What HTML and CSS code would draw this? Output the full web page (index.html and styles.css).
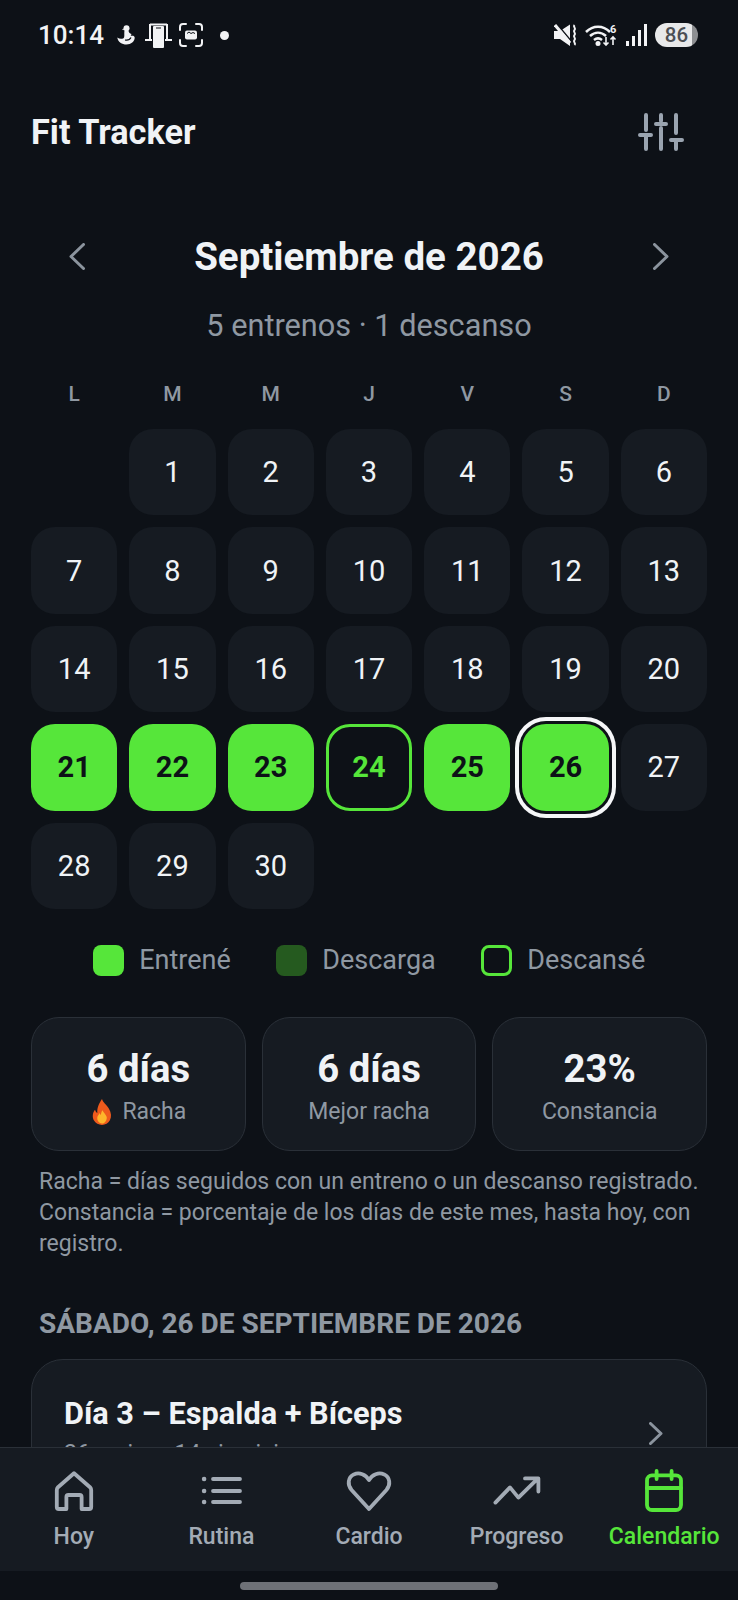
FILE: index.html
```html
<!DOCTYPE html>
<html lang="es">

<head>
    <meta charset="UTF-8">
    <meta name="viewport" content="width=device-width, initial-scale=1.0">
    <title>Fit Tracker</title>
    <link rel="stylesheet" href="styles.css">
</head>

<body>
    <main class="phone">
        <div class="status-bar">
            <span class="clock">10:14</span>
            <svg class="st-duck" viewBox="0 0 18 20"><circle cx="9.500" cy="3.200" r="3" fill="#f2f3f5"/><path d="M6.500 3.500L5 4.500l2 .8zM7.500 5.500h4c.2 1.800 1 3 3 3.500l-.8 1.800c2.300-.4 4 0 4 2 0 3.700-3.700 6.700-8.200 6.700S.8 17 .3 12.500c2 1.500 4.200 1.700 6.200.7C8 12 6.900 8.500 7.500 5.500z" fill="#f2f3f5"/><path d="M8 15c2.500.5 5-.5 6-2.500" fill="none" stroke="#0d1117" stroke-width="1.200"/></svg>
            <svg class="st-desk" viewBox="0 0 27 25"><path d="M5 1.500h17M5 1v15M22 1v15M0 17h7M20 17h7" fill="none" stroke="#f2f3f5" stroke-width="2"/><rect x="8" y="3" width="11" height="22" rx="1" fill="#f2f3f5"/><rect x="11" y="4.500" width="5" height="1" fill="#0d1117"/></svg>
            <svg class="st-shot" viewBox="0 0 24 24"><path d="M1 7V4a3 3 0 0 1 3-3h3M17 1h3a3 3 0 0 1 3 3v3M23 17v3a3 3 0 0 1-3 3h-3M7 23H4a3 3 0 0 1-3-3v-3" fill="none" stroke="#f2f3f5" stroke-width="2" stroke-linecap="round"/><rect x="6" y="7.500" width="12" height="9" rx="2" fill="#f2f3f5"/><path d="M8 10.500l2-1.500 2 1.500 2-1 2 1" fill="none" stroke="#0d1117" stroke-width="1"/></svg>
            <span class="st-dot"></span>
            <span class="status-spacer"></span>
            <svg class="st-mute" viewBox="0 0 24 22"><path d="M0 7h6l10-6.500V22L6 15H0z" fill="#f2f3f5"/><path d="M3 0l15 18" fill="none" stroke="#0d1117" stroke-width="1.500"/><path d="M1 1l15 18" fill="none" stroke="#f2f3f5" stroke-width="3"/><path d="M20.500 1c-2 2 2 3 0 5s2 3 0 5 2 3 0 5 2 3 0 5" fill="none" stroke="#f2f3f5" stroke-width="2"/></svg>
            <svg class="st-wifi" viewBox="0 0 33 22"><path d="M1 8c7-7 17-7 24 0M5 12c5-4.500 11-4.500 16 0M9 16c2.500-2 5.500-2 8 0" fill="none" stroke="#f2f3f5" stroke-width="2.500"/><circle cx="13" cy="19.500" r="2.500" fill="#f2f3f5"/><path d="M21 13v8m-2.500-2.500l2.500 2.500 2.500-2.500M28 21v-8m-2.500 2.500l2.500-2.500 2.500 2.500" fill="none" stroke="#f2f3f5" stroke-width="1.600"/><text x="25" y="9" class="st-six">6</text></svg>
            <svg class="st-signal" viewBox="0 0 21 22"><rect x="0" y="17" width="3" height="5" fill="#f2f3f5"/><rect x="6" y="12" width="3" height="10" fill="#f2f3f5"/><rect x="12" y="6" width="3" height="16" fill="#f2f3f5"/><rect x="18" y="0" width="3" height="22" fill="#f2f3f5"/></svg>
            <span class="st-battery">86</span>
        </div>

        <div class="content">
            <header class="top-bar">
                <h1 class="app-title">Fit Tracker</h1>
                <svg class="filter-icon" viewBox="0 0 46 38"><path d="M8 2v15M8 22v14M23 2v6M23 15v21M38 2v18M38 27v9" fill="none" stroke="#9aa4b0" stroke-width="4" stroke-linecap="round"/><path d="M2 22h11M18 11h10M33 27h11" fill="none" stroke="#9aa4b0" stroke-width="4" stroke-linecap="round"/></svg>
            </header>

            <section class="month-head">
                <svg class="month-arrow" viewBox="0 0 16 27"><path d="M14.500 1.500L2 13.500l12.500 12" fill="none" stroke="#8b949e" stroke-width="3" stroke-linecap="round" stroke-linejoin="round"/></svg>
                <h2 class="month-name">Septiembre de 2026</h2>
                <svg class="month-arrow" viewBox="0 0 16 27"><path d="M1.500 1.500L14 13.500l-12.500 12" fill="none" stroke="#8b949e" stroke-width="3" stroke-linecap="round" stroke-linejoin="round"/></svg>
            </section>
            <p class="month-sub">5 entrenos · 1 descanso</p>

            <div class="weekdays">
                <span>L</span><span>M</span><span>M</span><span>J</span><span>V</span><span>S</span><span>D</span>
            </div>

            <div class="calendar">
                <div class="day empty"></div>
                <div class="day">1</div>
                <div class="day">2</div>
                <div class="day">3</div>
                <div class="day">4</div>
                <div class="day">5</div>
                <div class="day">6</div>
                <div class="day">7</div>
                <div class="day">8</div>
                <div class="day">9</div>
                <div class="day">10</div>
                <div class="day">11</div>
                <div class="day">12</div>
                <div class="day">13</div>
                <div class="day">14</div>
                <div class="day">15</div>
                <div class="day">16</div>
                <div class="day">17</div>
                <div class="day">18</div>
                <div class="day">19</div>
                <div class="day">20</div>
                <div class="day trained">21</div>
                <div class="day trained">22</div>
                <div class="day trained">23</div>
                <div class="day rested">24</div>
                <div class="day trained">25</div>
                <div class="day trained today">26</div>
                <div class="day">27</div>
                <div class="day">28</div>
                <div class="day">29</div>
                <div class="day">30</div>
            </div>

            <div class="legend">
                <div class="legend-item"><span class="swatch trained"></span>Entrené</div>
                <div class="legend-item"><span class="swatch deload"></span>Descarga</div>
                <div class="legend-item"><span class="swatch rested"></span>Descansé</div>
            </div>

            <div class="stats">
                <div class="stat">
                    <strong>6 días</strong>
                    <span class="stat-label">
                        <svg class="flame" viewBox="0 0 22 28"><path d="M11 0c1 4 5 6 7.500 10.500C21 15 21.500 19 19.500 23c-1.800 3.200-5 5-8.500 5s-7-1.800-8.800-5C.2 19 1 14.500 3.500 11.500c.5 1.500 1.200 2.800 2.500 3.500C5.500 9 8 4.500 11 0z" fill="#ee5a1c"/><path d="M11.500 12c.8 2.500 3.500 4 4.500 7 .8 3-1.800 7.500-5 7.500S5.300 23 6 19.500c.5-2 1.800-3 2.500-4.500.4 1 .7 1.700 1.300 2.200.2-2 .7-3.700 1.700-5.200z" fill="#fdb52b"/></svg>
                        Racha
                    </span>
                </div>
                <div class="stat">
                    <strong>6 días</strong>
                    <span class="stat-label">Mejor racha</span>
                </div>
                <div class="stat">
                    <strong>23%</strong>
                    <span class="stat-label">Constancia</span>
                </div>
            </div>

            <p class="note">Racha = días seguidos con un entreno o un descanso registrado. Constancia = porcentaje de los días de este mes, hasta hoy, con registro.</p>

            <h3 class="date-title">SÁBADO, 26 DE SEPTIEMBRE DE 2026</h3>

            <div class="workout">
                <div class="workout-text">
                    <h4>Día 3 – Espalda + Bíceps</h4>
                    <p>26 series · 14 ejercicios</p>
                </div>
                <svg class="workout-arrow" viewBox="0 0 14 23"><path d="M1.500 1.500L12 11.500l-10.500 10" fill="none" stroke="#8b949e" stroke-width="3" stroke-linecap="round" stroke-linejoin="round"/></svg>
            </div>
        </div>

        <nav class="tabs">
            <div class="tab">
                <svg viewBox="0 0 24 24"><path d="M3.400 19.500V11q0-.8.600-1.400l8-7 8 7q.6.600.6 1.400v8.500q0 1-1 1h-3.800v-6q0-1-1-1h-5.600q-1 0-1 1v6H4.400q-1 0-1-1z"/></svg>
                <span>Hoy</span>
            </div>
            <div class="tab">
                <svg viewBox="0 0 24 24"><path d="M8 5.500h13.500M8 11.500h13.500M8 17h13.500"/><path class="dots" d="M3.500 5.500h.1M3.500 11.500h.1M3.500 17h.1"/></svg>
                <span>Rutina</span>
            </div>
            <div class="tab">
                <svg viewBox="0 0 24 24"><path d="M12 20.500L3.300 11C1 8.300 1.500 4.600 4.400 3.200 7.200 2 10.400 3.200 12 6c1.600-2.800 4.800-4 7.600-2.800 2.900 1.400 3.400 5.100 1.100 7.800z"/></svg>
                <span>Cardio</span>
            </div>
            <div class="tab">
                <svg viewBox="0 0 24 24"><path d="M1.200 17.300L8.500 9.700l4.200 5.100 9.800-9.600M16 5.200h6.700v6.600"/></svg>
                <span>Progreso</span>
            </div>
            <div class="tab active">
                <svg viewBox="0 0 24 24"><rect x="3.500" y="3.700" width="17" height="17.300" rx="2.500"/><path d="M3.500 10h17M8.300 1.500v4M15.800 1.500v4"/></svg>
                <span>Calendario</span>
            </div>
        </nav>

        <div class="gesture-area">
            <span class="gesture-bar"></span>
        </div>
    </main>
</body>

</html>
```

FILE: styles.css
```css
:root {
    --bg: #0d1117;
    --surface: #161b22;
    --border: #2a3038;
    --green: #56e63a;
    --green-dark: #255a1f;
    --text: #f0f3f6;
    --muted: #8f98a2;
    --soft: #a3abb5;
}

* {
    margin: 0;
    padding: 0;
    box-sizing: border-box;
}

body {
    background-color: var(--bg);
    font-family: Roboto, "Liberation Sans", sans-serif;
    color: var(--text);
}

.phone {
    width: 738px;
    height: 1600px;
    display: flex;
    flex-direction: column;
    overflow: hidden;
}

/* status bar */
.status-bar {
    height: 70px;
    flex: none;
    display: flex;
    align-items: center;
    padding: 0 40px 0 38px;
}

.clock {
    font-size: 26px;
    font-weight: 500;
    color: #f2f3f5;
    width: 79px;
}

.st-duck {
    width: 18px;
    height: 20px;
}

.st-desk {
    width: 27px;
    height: 25px;
    margin-left: 10px;
}

.st-shot {
    width: 24px;
    height: 24px;
    margin-left: 7px;
}

.st-dot {
    width: 9px;
    height: 9px;
    margin-left: 17px;
    border-radius: 50%;
    background-color: #f2f3f5;
}

.status-spacer {
    flex: 1;
}

.st-mute {
    width: 24px;
    height: 22px;
}

.st-wifi {
    width: 33px;
    height: 22px;
    margin-left: 7px;
}

.st-six {
    font-size: 11px;
    font-weight: 700;
    fill: #f2f3f5;
}

.st-signal {
    width: 21px;
    height: 22px;
    margin-left: 8px;
}

.st-battery {
    width: 43px;
    height: 24px;
    margin-left: 8px;
    border-radius: 12px;
    background: linear-gradient(to right, #e8e9ea 86%, #8d8f92 86%);
    color: #4c4f54;
    font-size: 20.500px;
    font-weight: 500;
    line-height: 24px;
    text-align: center;
}

/* scrolling part */
.content {
    flex: 1;
    min-height: 0;
    overflow: hidden;
    padding: 0 31px;
}

.top-bar {
    height: 38px;
    margin-top: 43px;
    padding-right: 23px;
    display: flex;
    justify-content: space-between;
    align-items: center;
}

.app-title {
    font-size: 34.300px;
    font-weight: 700;
}

.filter-icon {
    width: 46px;
    height: 38px;
}

.month-head {
    height: 44px;
    margin-top: 83px;
    padding: 0 38px;
    display: flex;
    justify-content: space-between;
    align-items: center;
}

.month-arrow {
    width: 16px;
    height: 27px;
}

.month-name {
    font-size: 38.500px;
    font-weight: 700;
}

.month-sub {
    margin-top: 30px;
    font-size: 30.700px;
    line-height: 36px;
    text-align: center;
    color: var(--muted);
}

.weekdays {
    margin-top: 38px;
    display: grid;
    grid-template-columns: repeat(7, 1fr);
    gap: 12px;
    font-size: 21px;
    font-weight: 500;
    line-height: 24px;
    text-align: center;
    color: var(--muted);
}

.calendar {
    margin-top: 23px;
    display: grid;
    grid-template-columns: repeat(7, 1fr);
    gap: 12px;
}

.day {
    height: 86.4px;
    display: flex;
    justify-content: center;
    align-items: center;
    border-radius: 24px;
    background-color: var(--surface);
    font-size: 29px;
}

.day.empty {
    background: none;
}

.day.trained {
    background-color: var(--green);
    color: #0d1117;
    font-weight: 700;
}

.day.rested {
    border: 3px solid var(--green);
    background: none;
    color: var(--green);
    font-weight: 700;
}

.day.today {
    box-shadow: 0 0 0 3px var(--bg), 0 0 0 7px #f5f6f8;
}

.legend {
    margin-top: 36px;
    display: flex;
    justify-content: center;
    gap: 45px;
}

.legend-item {
    display: flex;
    align-items: center;
    gap: 15.500px;
    font-size: 27px;
    line-height: 31px;
    color: var(--muted);
}

.swatch {
    width: 31px;
    height: 31px;
    border-radius: 8px;
}

.swatch.trained {
    background-color: var(--green);
}

.swatch.deload {
    background-color: var(--green-dark);
}

.swatch.rested {
    border: 3px solid var(--green);
}

.stats {
    margin-top: 41px;
    display: grid;
    grid-template-columns: repeat(3, 1fr);
    gap: 16px;
}

.stat {
    height: 134px;
    padding-top: 7px;
    display: flex;
    flex-direction: column;
    align-items: center;
    justify-content: center;
    border: 1px solid var(--border);
    border-radius: 28px;
    background-color: var(--surface);
}

.stat strong {
    font-size: 38.300px;
    font-weight: 700;
    line-height: 44px;
}

.stat-label {
    display: flex;
    align-items: center;
    gap: 8px;
    margin-top: 6px;
    font-size: 23px;
    line-height: 30px;
    color: var(--muted);
}

.flame {
    width: 24px;
    height: 26px;
}

.note {
    margin-top: 15px;
    padding-left: 8px;
    font-size: 23.040px;
    line-height: 31px;
    color: var(--muted);
}

.date-title {
    margin-top: 49px;
    padding: 0 8px;
    font-size: 28px;
    font-weight: 700;
    line-height: 32px;
    color: var(--muted);
}

.workout {
    margin-top: 19px;
    height: 200px;
    padding: 36px 43px 0 32px;
    display: flex;
    justify-content: space-between;
    align-items: flex-start;
    border: 1px solid var(--border);
    border-radius: 32px;
    background-color: var(--surface);
}

.workout-text h4 {
    font-size: 30.700px;
    font-weight: 700;
    line-height: 36px;
}

.workout-text p {
    margin-top: 8px;
    font-size: 23px;
    color: var(--muted);
}

.workout-arrow {
    width: 14px;
    height: 23px;
    margin-top: 26px;
}

/* bottom nav */
.tabs {
    height: 124px;
    flex: none;
    display: grid;
    grid-template-columns: repeat(5, 1fr);
    border-top: 1px solid var(--border);
    background-color: var(--surface);
}

.tab {
    padding-top: 20px;
    display: flex;
    flex-direction: column;
    align-items: center;
    font-size: 23px;
    font-weight: 500;
    color: var(--soft);
}

.tab svg {
    width: 48px;
    height: 48px;
    fill: none;
    stroke: var(--soft);
    stroke-width: 1.900;
    stroke-linecap: round;
    stroke-linejoin: round;
}

.tab svg .dots {
    stroke-width: 2.200;
}

.tab span {
    margin-top: 8px;
    line-height: 26px;
    white-space: nowrap;
}

.tab.active {
    color: var(--green);
}

.tab.active svg {
    stroke: var(--green);
}

.gesture-area {
    height: 29px;
    flex: none;
    display: flex;
    justify-content: center;
    padding-top: 11px;
}

.gesture-bar {
    width: 258px;
    height: 8px;
    border-radius: 4px;
    background-color: #6e7177;
}
```
